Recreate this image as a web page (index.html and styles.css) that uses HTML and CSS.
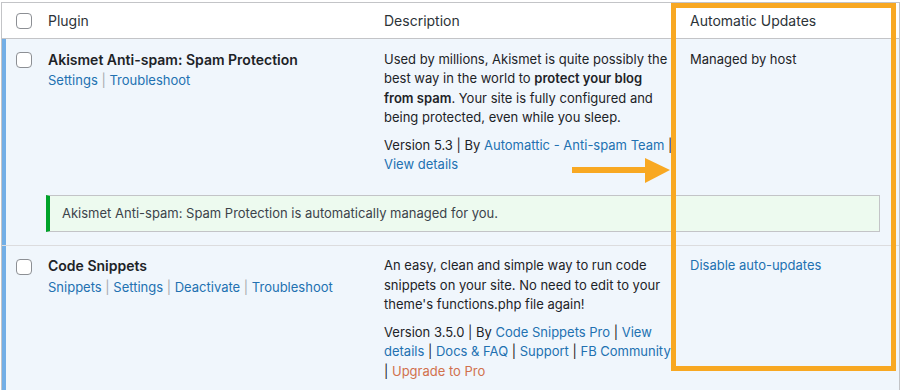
FILE: index.html
```html
<!DOCTYPE html>
<html>
<head>
<meta charset="utf-8">
<link rel="stylesheet" href="styles.css">
</head>
<body>
<div class="page">
  <div class="table">
    <div class="row head">
      <div class="cb-cell"><span class="cb"></span></div>
      <div class="cell">Plugin</div>
      <div class="cell">Description</div>
      <div class="cell">Automatic Updates</div>
    </div>

    <div class="plugin first">
      <div class="row">
        <div class="cb-cell"><span class="cb"></span></div>
        <div class="cell">
          <div class="name">Akismet Anti-spam: Spam Protection</div>
          <div class="actions"><a>Settings</a> <span class="sep">|</span> <a>Troubleshoot</a></div>
        </div>
        <div class="cell desc">
          <p>Used by millions, Akismet is quite possibly the best way in the world to <b>protect your blog from spam</b>. Your site is fully configured and being protected, even while you sleep.</p>
          <p>Version 5.3 | By <a>Automattic - Anti-spam Team</a> | <a>View details</a></p>
        </div>
        <div class="cell">Managed by host</div>
      </div>
      <div class="notice">Akismet Anti-spam: Spam Protection is automatically managed for you.</div>
    </div>

    <div class="plugin second">
      <div class="row">
        <div class="cb-cell"><span class="cb"></span></div>
        <div class="cell">
          <div class="name">Code Snippets</div>
          <div class="actions"><a>Snippets</a> <span class="sep">|</span> <a>Settings</a> <span class="sep">|</span> <a>Deactivate</a> <span class="sep">|</span> <a>Troubleshoot</a></div>
        </div>
        <div class="cell desc">
          <p>An easy, clean and simple way to run code snippets on your site. No need to edit to your theme's functions.php file again!</p>
          <p>Version 3.5.0 | By <a>Code Snippets Pro</a> | <a>View details</a> | <a>Docs &amp; FAQ</a> | <a>Support</a> | <a>FB Community</a> | <a class="pro">Upgrade to Pro</a></p>
        </div>
        <div class="cell"><a>Disable auto-updates</a></div>
      </div>
    </div>
  </div>

  <div class="highlight"></div>
  <svg class="arrow" width="100" height="28" viewBox="0 0 100 28">
    <rect x="0" y="10" width="76" height="6" fill="#f8a822"/>
    <polygon points="73,1 98,13 73,26" fill="#f8a822"/>
  </svg>
</div>
</body>
</html>
```

FILE: styles.css
```css
html, body {
  margin: 0;
  padding: 0;
  background: #ffffff;
}

body {
  font-family: Inter, "Noto Sans", sans-serif;
  font-size: 13px;
  line-height: 19.5px;
  color: #1d2327;
}

.page {
  position: relative;
  width: 902px;
  height: 390px;
  overflow: hidden;
  padding: 2px 0 0 1px;
  box-sizing: border-box;
}

.table {
  width: 899px;
  border: 1px solid #c3c4c7;
  border-bottom: none;
  box-sizing: border-box;
  background: #fff;
}

.row {
  display: grid;
  grid-template-columns: 38px 336px 306px 1fr;
}

.head {
  border-bottom: 1px solid #c3c4c7;
  font-size: 14px;
  color: #2c3338;
}

.head .cell {
  padding: 8px 8px 7px 8px;
}

.head .cb-cell {
  padding-top: 10px;
}

.cb-cell {
  padding: 13px 0 0 14px;
}

.cb {
  display: block;
  width: 14px;
  height: 14px;
  border: 1px solid #8c8f94;
  border-radius: 4px;
  background: #fff;
}

.cell {
  padding: 0 8px;
}

.plugin {
  background: #f0f6fc;
  box-shadow: inset 4px 0 0 #72aee6;
  padding: 11px 0 14px 0;
}

.first {
  padding-bottom: 13px;
}

.plugin .cell {
  padding-top: 0;
}

.plugin .cb-cell {
  padding-top: 2px;
}

.second {
  border-top: 1px solid #dcdcde;
  padding-top: 10px;
}

.second .cb-cell {
  padding-top: 3px;
}

.name {
  font-weight: 600;
  font-size: 14px;
}

.actions {
  padding-top: 2px;
}

a {
  color: #2271b1;
  text-decoration: none;
}

.sep {
  color: #a7aaad;
}

.desc p {
  margin: 0 0 8px 0;
}

.desc p:last-child {
  margin-bottom: 0;
}

.desc b {
  font-weight: 600;
}

.pro {
  color: #d1714d;
}

.notice {
  margin: 20px 19px 0 44px;
  background: #edfaef;
  border: 1px solid #c3c4c7;
  border-left: 4px solid #00a32a;
  padding: 8px 12px;
  color: #3c434a;
}

.highlight {
  position: absolute;
  left: 671px;
  top: 3px;
  width: 225px;
  height: 368px;
  border: 5.5px solid #f8a822;
  box-sizing: border-box;
}

.arrow {
  position: absolute;
  left: 572px;
  top: 157px;
}
```
